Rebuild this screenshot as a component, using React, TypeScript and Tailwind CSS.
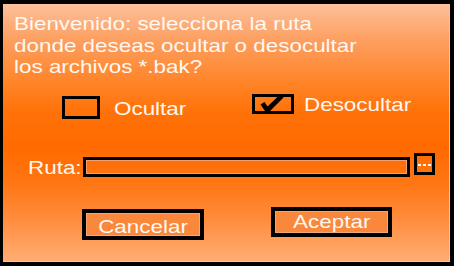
import React from "react";

const font = { fontFamily: '"Liberation Sans", Arial, sans-serif' };

function T({ children, className = "" }: { children: React.ReactNode; className?: string }) {
  return (
    <span className={`inline-block origin-left scale-x-[1.18] whitespace-nowrap ${className}`}>{children}</span>
  );
}

export default function App() {
  return (
    <div className="w-[454px] h-[266px] overflow-hidden bg-black pt-[4px] pl-[3px] pr-[4px] pb-[4px]" style={font}>
      <div className="h-full w-full flex flex-col items-start border-r border-b border-[#f7c2a2] bg-[linear-gradient(to_bottom,#fcc09a_0%,#fd9f60_14%,#ff8830_28%,#ff7208_42%,#ff6a00_56%,#ff7614_70%,#ff8d3e_84%,#ffad74_100%)] text-[#fff8f2] text-[19px] leading-[21.5px]">
        {/* Message */}
        <div className="pt-[9px] pl-[11px] flex flex-col items-start">
          <T>Bienvenido: selecciona la ruta</T>
          <T>donde deseas ocultar o desocultar</T>
          <T>los archivos *.bak?</T>
        </div>

        {/* Checkbox row */}
        <div className="mt-[16.5px] flex items-start">
          <div className="ml-[59px] mt-[2px] w-[38px] h-[23px] border-[3.5px] border-black shrink-0" />
          <div className="ml-[14px] mt-[4px] w-[138px] shrink-0">
            <T>Ocultar</T>
          </div>
          <div className="relative w-[42px] h-[20px] border-[3.5px] border-black shrink-0">
            <svg className="absolute left-0 top-[-4px]" width="32" height="22" viewBox="0 0 32 22">
              <path d="M5.5 11.5 L9.5 9 L12.5 13.5 L25 1.5 L28.5 4.5 L13.5 19.5 L11 19.5 Z" fill="#000" />
            </svg>
          </div>
          <div className="ml-[10px] mt-[0px] shrink-0">
            <T>Desocultar</T>
          </div>
        </div>

        {/* Ruta row */}
        <div className="mt-[33.5px] flex items-start">
          <div className="ml-[25px] mt-[4px] w-[55px] shrink-0">
            <T>Ruta:</T>
          </div>
          <div className="mt-[4px] w-[327px] h-[20px] border-[3.5px] border-black shadow-[inset_0_0_0_1px_#f2a070] shrink-0" />
          <div className="ml-[4px] w-[21px] h-[22px] border-[3.5px] border-black flex items-center justify-center gap-[2px] pt-[2px] shrink-0">
            <span className="w-[3px] h-[2px] bg-white" />
            <span className="w-[3px] h-[2px] bg-white" />
            <span className="w-[3px] h-[2px] bg-white" />
          </div>
        </div>

        {/* Buttons row */}
        <div className="mt-[28.5px] flex items-start">
          <div className="ml-[79px] mt-[2px] w-[122px] h-[31px] border-[4px] border-black bg-[#f9883c] shadow-[inset_0_0_0_1px_#f0a878] flex justify-center pt-[3px] shrink-0">
            <span className="inline-block origin-center scale-x-[1.18] whitespace-nowrap">Cancelar</span>
          </div>
          <div className="ml-[67px] w-[121px] h-[30px] border-[4px] border-black bg-[#f9883c] shadow-[inset_0_0_0_1px_#f0a878] flex justify-center pt-[0px] shrink-0">
            <span className="inline-block origin-center scale-x-[1.18] whitespace-nowrap">Aceptar</span>
          </div>
        </div>
      </div>
    </div>
  );
}
